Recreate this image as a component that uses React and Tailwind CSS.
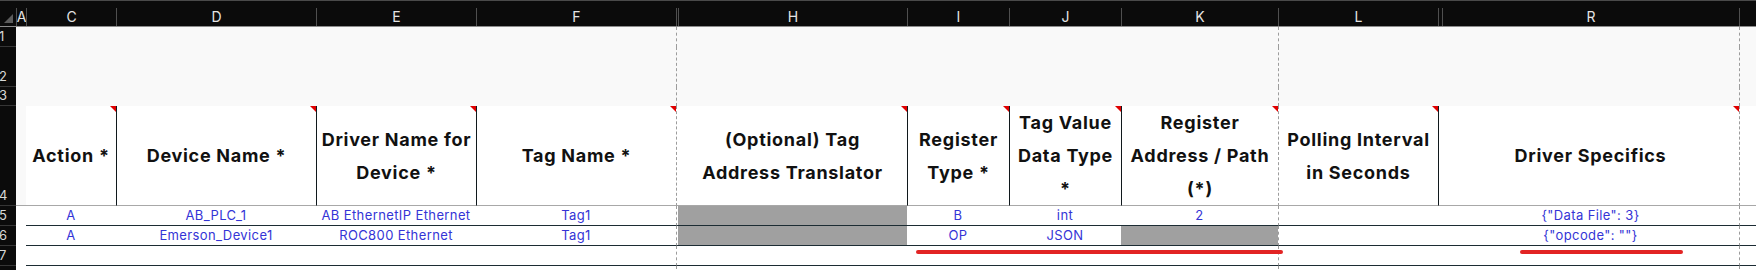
import React from "react";

// rowhead, A, C, D, E, F, G(hidden), H, I, J, K, L, M(hidden), R, S
const GRID =
  "grid grid-cols-[16px_10px_90px_200px_160px_200px_2px_229px_102px_112px_157px_160px_4px_297px_1fr]";

const DASH = "border-l border-l-[#9c9c9c] [border-left-style:dashed]";
const SOLID = "border-l border-l-[#10181c]";

const dashed = (i) => (i === 6 || i === 11 || i === 14 ? DASH : "");
const headLeft = (i) => {
  if (i === 6 || i === 11 || i === 14) return DASH;
  if ([3, 4, 5, 8, 9, 10, 12].includes(i)) return SOLID;
  return "";
};

const letters = ["", "A", "C", "D", "E", "F", "", "H", "I", "J", "K", "L", "", "R", ""];

const headers = {
  2: ["Action *"],
  3: ["Device Name *"],
  4: ["Driver Name for", "Device *"],
  5: ["Tag Name *"],
  7: ["(Optional) Tag", "Address Translator"],
  8: ["Register", "Type *"],
  9: ["Tag Value", "Data Type", "*"],
  10: ["Register", "Address / Path", "(*)"],
  11: ["Polling Interval", "in Seconds"],
  13: ["Driver Specifics"],
};

const rows = [
  {
    n: 5,
    cells: { 2: "A", 3: "AB_PLC_1", 4: "AB EthernetIP Ethernet", 5: "Tag1", 8: "B", 9: "int", 10: "2", 13: '{"Data File": 3}' },
    gray: [7],
  },
  {
    n: 6,
    cells: { 2: "A", 3: "Emerson_Device1", 4: "ROC800 Ethernet", 5: "Tag1", 8: "OP", 9: "JSON", 13: '{"opcode": ""}' },
    gray: [7, 10],
  },
  { n: 7, cells: {}, gray: [] },
  { n: "", cells: {}, gray: [] },
];

const cols = Array.from({ length: 14 }, (_, k) => k + 1);

const RowHead = ({ n }) => (
  <div className="flex items-end overflow-hidden border-b border-b-[#363636] bg-[#0b0b0b] pb-[3px] text-[13px] leading-none text-[#d8d8d8]">
    <span className="-ml-[1px]">{n}</span>
  </div>
);

const BlankRow = ({ n, h }) => (
  <div className={`${GRID} ${h}`}>
    <RowHead n={n} />
    {cols.map((i) => (
      <div key={i} className={`bg-[#f9f9f9] ${dashed(i)}`} />
    ))}
  </div>
);

export default function App() {
  return (
    <div className="relative h-[270px] w-[1756px] overflow-hidden bg-white font-[Inter,sans-serif]">
      {/* column letters */}
      <div className={`${GRID} h-[27px] border-t border-b border-t-[#4a4a4a] border-b-[#8c8c8c] bg-[#0b0b0b]`}>
        <div className="flex items-end justify-end pr-[3px] pb-[3px]">
          <svg width="9" height="9" viewBox="0 0 9 9">
            <polygon points="9,0 9,9 0,9" fill="#5c5c5c" />
          </svg>
        </div>
        {cols.map((i) => (
          <div
            key={i}
            className="mt-[7px] flex items-center justify-center border-l border-l-[#4f4f4f] text-[14px] leading-none text-[#e4e4e4]"
          >
            {letters[i]}
          </div>
        ))}
      </div>

      <BlankRow n={1} h="h-[20px]" />
      <BlankRow n={2} h="h-[40px]" />
      <BlankRow n={3} h="h-[19px]" />

      {/* row 4: field headers */}
      <div className={`${GRID} h-[100px]`}>
        <RowHead n={4} />
        {cols.map((i) => (
          <div
            key={i}
            className={`relative flex flex-col items-center justify-center whitespace-nowrap border-b border-b-[#a8a8a8] text-center text-[18px] font-bold leading-[33px] tracking-[0.04em] text-[#111] ${
              i === 1 ? "bg-[#f9f9f9]" : "bg-white"
            } ${headLeft(i)}`}
          >
            {headers[i] && headers[i].map((line) => <span key={line}>{line}</span>)}
            {headers[i] && (
              <span className="absolute right-0 top-0 h-0 w-0 border-l-[6px] border-t-[6px] border-l-transparent border-t-[#e00000]" />
            )}
          </div>
        ))}
      </div>

      {/* data rows */}
      {rows.map((r, k) => (
        <div key={k} className={`${GRID} h-[20px]`}>
          <RowHead n={r.n} />
          {cols.map((i) => (
            <div
              key={i}
              className={`flex items-center justify-center whitespace-nowrap text-[13px] leading-none tracking-[0.03em] text-[#3434d6] ${
                i === 1 ? "" : "border-b border-b-[#1c2c33]"
              } ${r.gray.includes(i) ? "bg-[#a0a0a0]" : ""} ${dashed(i)}`}
            >
              {r.cells[i] || ""}
            </div>
          ))}
        </div>
      ))}

      {/* hand-drawn red marks */}
      <div className="absolute left-[916px] top-[250px] h-[4px] w-[367px] rounded-full bg-[#e22424]" />
      <div className="absolute left-[1520px] top-[250px] h-[4px] w-[163px] rounded-full bg-[#e22424]" />
    </div>
  );
}
